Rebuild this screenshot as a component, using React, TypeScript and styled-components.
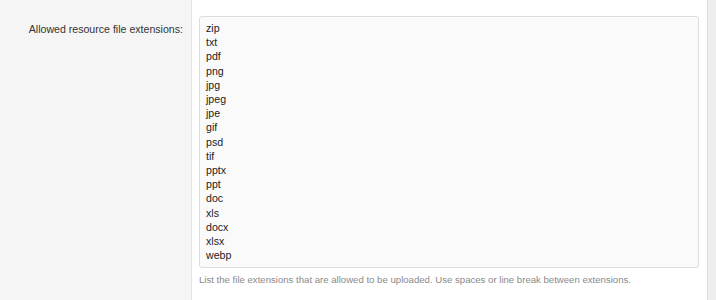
import React, {useState} from "react";
import styled, {createGlobalStyle} from "styled-components";

const GlobalStyle = createGlobalStyle`
  html, body {
    margin: 0;
    padding: 0;
    background: #ffffff;
    font-family: "Liberation Sans", Arial, Helvetica, sans-serif;
  }
`

const Page = styled.div`
  display: flex;
  width: 716px;
  height: 300px;
  overflow: hidden;
`

const LabelColumn = styled.div`
  width: 192px;
  flex-shrink: 0;
  box-sizing: border-box;
  background-color: #f5f5f5;
  border-right: 1px solid #e4e4e4;
  padding: 19px 8px 0 0;
  text-align: right;
`

const Label = styled.label`
  font-size: 10.6px;
  color: #333333;
  line-height: 14px;
`

const FieldColumn = styled.div`
  flex: 1;
  display: flex;
  flex-direction: column;
  padding: 16px 8px 0 7px;
  background-color: #ffffff;
`

const TextArea = styled.textarea`
  display: block;
  box-sizing: border-box;
  width: 500px;
  height: 252px;
  margin: 0;
  padding: 4px 6px;
  border: 1px solid #dcdcdc;
  border-radius: 3px;
  background-color: #fafafa;
  color: #222222;
  font-family: "Liberation Sans", Arial, Helvetica, sans-serif;
  font-size: 10.6px;
  line-height: 14.2px;
  resize: none;
  outline: none;
  overflow: hidden;
`

const Hint = styled.div`
  margin-top: 6px;
  font-size: 9.6px;
  line-height: 12px;
  color: #8a8a8a;
`

const SideStrip = styled.div`
  width: 9px;
  flex-shrink: 0;
  background-color: #eeeeee;
  border-left: 1px solid #dddddd;
  box-sizing: border-box;
`

const EXTENSIONS = ["zip", "txt", "pdf", "png", "jpg", "jpeg", "jpe", "gif", "psd", "tif", "pptx", "ppt", "doc", "xls", "docx", "xlsx", "webp"];

const App = () => {
    const [value, setValue] = useState<string>(EXTENSIONS.join("\n"));

    return (
        <Page>
            <GlobalStyle />
            <LabelColumn>
                <Label htmlFor="extensions">Allowed resource file extensions:</Label>
            </LabelColumn>
            <FieldColumn>
                <TextArea id="extensions" value={value} onChange={(event) => setValue(event.target.value)} />
                <Hint>List the file extensions that are allowed to be uploaded. Use spaces or line break between extensions.</Hint>
            </FieldColumn>
            <SideStrip />
        </Page>
    )
}

export default App;
